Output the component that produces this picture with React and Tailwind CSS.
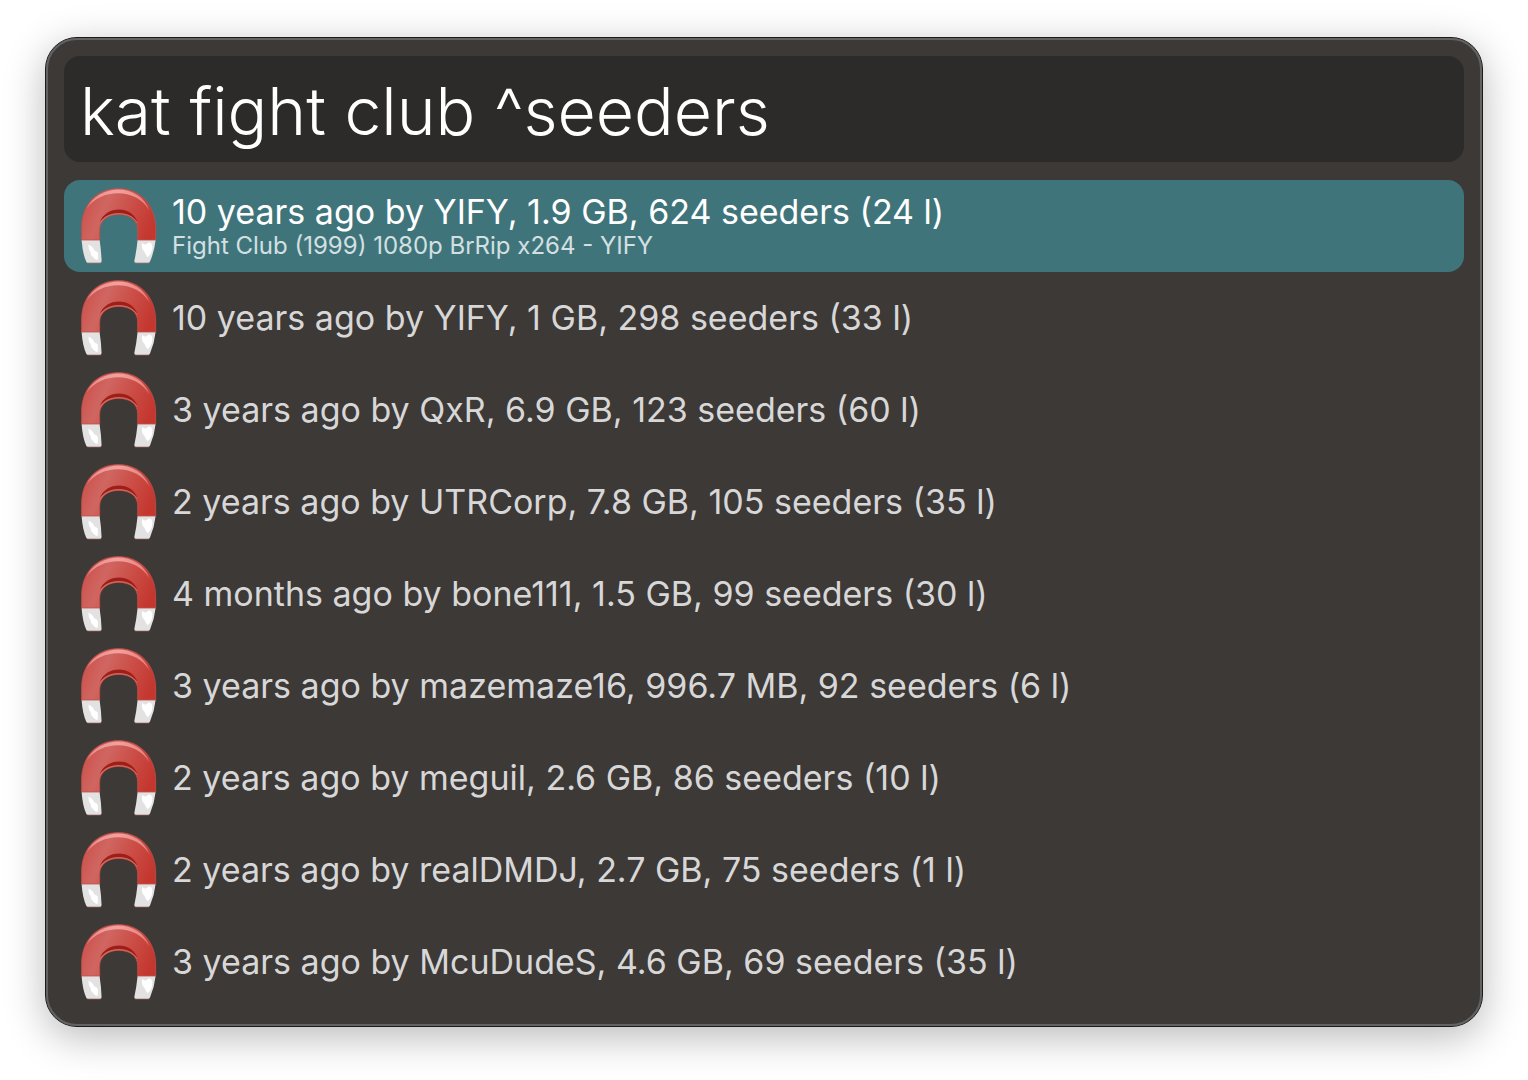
import React from "react";

const results = [
  { title: "10 years ago by YIFY, 1.9 GB, 624 seeders (24 l)", subtitle: "Fight Club (1999) 1080p BrRip x264 - YIFY" },
  { title: "10 years ago by YIFY, 1 GB, 298 seeders (33 l)" },
  { title: "3 years ago by QxR, 6.9 GB, 123 seeders (60 l)" },
  { title: "2 years ago by UTRCorp, 7.8 GB, 105 seeders (35 l)" },
  { title: "4 months ago by bone111, 1.5 GB, 99 seeders (30 l)" },
  { title: "3 years ago by mazemaze16, 996.7 MB, 92 seeders (6 l)" },
  { title: "2 years ago by meguil, 2.6 GB, 86 seeders (10 l)" },
  { title: "2 years ago by realDMDJ, 2.7 GB, 75 seeders (1 l)" },
  { title: "3 years ago by McuDudeS, 4.6 GB, 69 seeders (35 l)" },
];

function MagnetDefs() {
  return (
    <svg className="absolute size-0" aria-hidden="true">
      <defs>
        <linearGradient id="magnet-red" x1="0" y1="0.3" x2="1" y2="0.6">
          <stop offset="0" stopColor="#cc504a" />
          <stop offset="0.3" stopColor="#d06661" />
          <stop offset="0.65" stopColor="#cb4d46" />
          <stop offset="1" stopColor="#c3372f" />
        </linearGradient>
        <linearGradient id="magnet-shine" x1="0" y1="0" x2="1" y2="0">
          <stop offset="0" stopColor="#e98d8b" />
          <stop offset="0.5" stopColor="#f2a19f" />
          <stop offset="1" stopColor="#e77f7b" />
        </linearGradient>
      </defs>
    </svg>
  );
}

function Magnet() {
  return (
    <svg viewBox="0 0 80 80" className="size-20 shrink-0" aria-hidden="true">
      <path d="M3.6 54 Q4.6 68 8.4 76 Q9 77 11 77 H21.5 Q23.6 77 23.6 75 Q23.2 65 21.6 54Z" fill="#e3e2e2" />
      <path d="M59.6 54 Q58.5 65 56.4 74.6 Q56 77 58.2 77 H69.5 Q71.3 77 72 75.5 Q76.5 65 77.6 54Z" fill="#e3e2e2" />
      <path d="M9.5 76.8 H22.8 M57 76.8 H71" stroke="#c98582" strokeWidth="0.7" />
      <path d="M10.5 58.5 Q15 60.5 16.5 64.5 L19.5 66 Q20.8 70 19.5 74 Q17.8 74.5 15 71 Q12.5 69.5 12.8 66.8 Q10 63 10.5 58.5Z" fill="#fff" />
      <path d="M64 57 L67.3 58.8 L71.5 56.3 Q75.2 58 74.2 63 Q73.2 69 69.5 71.2 Q67.5 68.5 66.5 66 Q63 63 64 57Z" fill="#fff" />
      <path
        d="M3.6 54 V42 C3.6 18 19 2.6 40.5 2.6 C62 2.6 77.7 19 77.7 43 V54 H59.7 V44 C59.7 34 52 28.4 40.7 28.4 C29.5 28.4 21.7 34.5 21.7 44 V54Z"
        fill="url(#magnet-red)"
        stroke="#c24e47"
        strokeWidth="0.8"
      />
      <path d="M21.8 36.5 C27 20 54 18.5 59.6 36.5 C52 24.5 29.5 24 21.8 36.5Z" fill="#9c2018" />
      <path d="M22.6 36.8 C29 24.6 53 24.6 59 36.8" fill="none" stroke="#df6b63" strokeWidth="0.9" />
      <path d="M8.5 22.5 C21 -2.5 61 -4 71.5 24.5 C59 3 25 1 8.5 22.5Z" fill="url(#magnet-shine)" />
    </svg>
  );
}

export default function App() {
  return (
    <main className="min-h-screen bg-white px-[45px] py-[37px] font-['Inter',sans-serif]">
      <MagnetDefs />
      <section className="rounded-[32px] border border-[#1b1b1b] bg-[#3c3937] shadow-[0_10px_40px_rgba(0,0,0,0.28)]">
        <div className="rounded-[31px] border-2 border-[#646363] p-4">
          <input
            type="text"
            aria-label="Search"
            defaultValue="kat fight club ^seeders"
            spellCheck={false}
            className="block h-[106px] w-full rounded-2xl bg-[#2d2b2a] px-4 pt-1 text-[66px] font-light text-white outline-none"
          />
          <ul className="mt-[18px]">
            {results.map((item, i) => (
              <li key={item.title}>
                <button
                  type="button"
                  className={
                    i === 0
                      ? "flex h-[92px] w-full items-center gap-[14px] rounded-2xl bg-[#40747b] px-[14px] text-left text-white"
                      : "flex h-[92px] w-full items-center gap-[14px] rounded-2xl px-[14px] text-left text-[#d8d7d7]"
                  }
                >
                  <Magnet />
                  <span className="flex flex-col">
                    <span className="text-[34px] leading-10">{item.title}</span>
                    {item.subtitle && (
                      <span className="text-[24px] leading-7 text-[#d3e0e2]">{item.subtitle}</span>
                    )}
                  </span>
                </button>
              </li>
            ))}
          </ul>
        </div>
      </section>
    </main>
  );
}
